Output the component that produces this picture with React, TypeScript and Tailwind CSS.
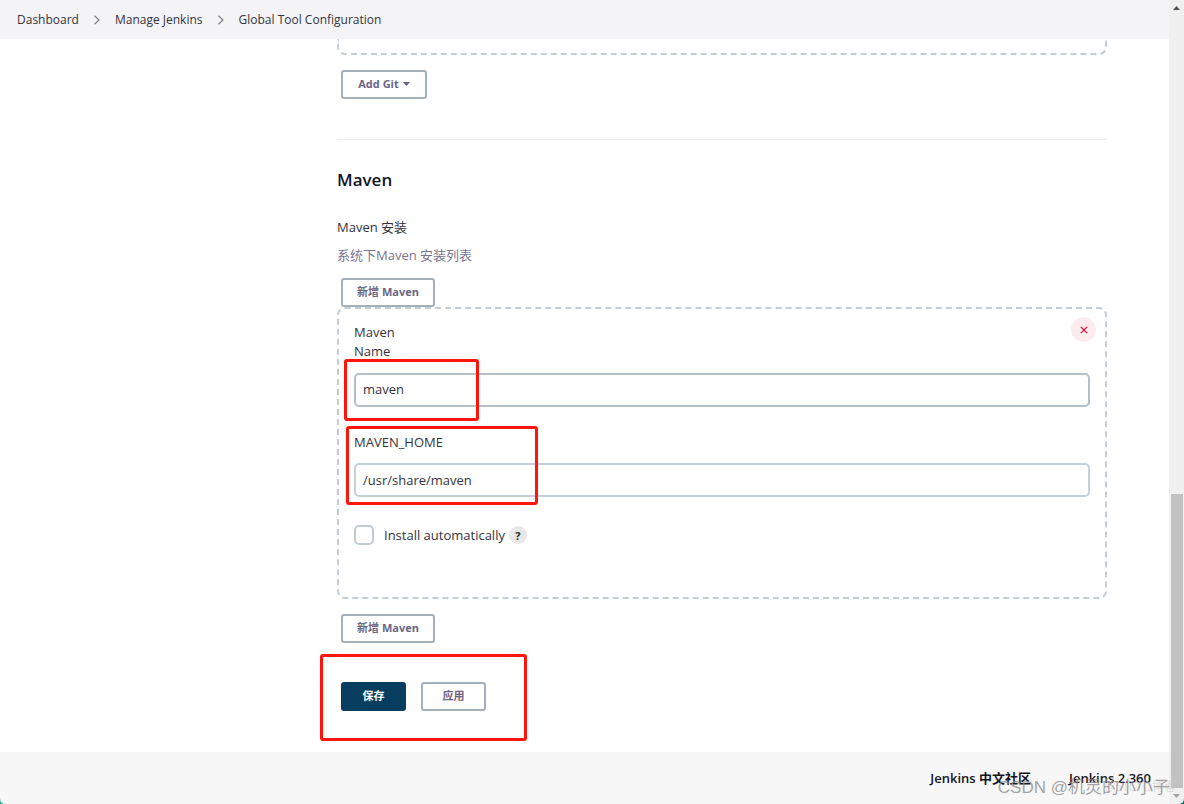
import React, { useState } from 'react';
import clsx from 'clsx';

const breadcrumbs = ['Dashboard', 'Manage Jenkins', 'Global Tool Configuration'];

interface ButtonProps {
  children: React.ReactNode;
  primary?: boolean;
  className?: string;
}

const Button: React.FC<ButtonProps> = ({ children, primary, className }) => (
  <button
    type="button"
    className={clsx(
      'inline-flex h-[29px] items-center justify-center rounded-[3px] border-2 pb-[2px] text-[11px] font-bold whitespace-nowrap',
      primary ? 'border-[#073d5e] bg-[#073d5e] text-white' : 'border-[#a3b0ba] bg-white text-[#6b6583]',
      className
    )}
  >
    {children}
  </button>
);

// Red marker drawn over the parts of the form worth noticing
const Highlight: React.FC<{ className: string }> = ({ className }) => (
  <div className={clsx('pointer-events-none absolute rounded-[3px] border-[3px] border-[#ff160a]', className)} />
);

const Scrollbar = () => (
  <div className="flex w-[15px] shrink-0 flex-col items-center bg-[#f0f0f0]">
    <svg className="h-4 w-[15px]" viewBox="0 0 15 16">
      <path d="M4 10 L7.5 6 L11 10 Z" fill="#505050" />
    </svg>
    <div className="flex w-3 flex-1 flex-col">
      <div className="flex-[478]" />
      <div className="flex-[294] bg-[#c1c1c1]" />
    </div>
    <svg className="h-4 w-[15px]" viewBox="0 0 15 16">
      <path d="M4 6 L7.5 10 L11 6 Z" fill="#a3a3a3" />
    </svg>
  </div>
);

export default function App() {
  const [name, setName] = useState('maven');
  const [home, setHome] = useState('/usr/share/maven');
  const [autoInstall, setAutoInstall] = useState(false);

  return (
    <div className="relative flex min-h-screen bg-white font-['Open_Sans','Noto_Sans_CJK_SC',sans-serif] text-[13px] leading-[19px] text-[#333340]">
      <div className="flex min-w-0 flex-1 flex-col">
        {/* Breadcrumbs */}
        <nav className="flex h-[39px] items-center bg-[#f4f4f6] px-[17px] text-[12px]">
          {breadcrumbs.map((item, i) => (
            <React.Fragment key={item}>
              {i > 0 && (
                <svg className="mx-3 h-3 w-3" viewBox="0 0 12 12" fill="none" stroke="#808088" strokeWidth="1.2">
                  <path d="M3.5 1.8 L8 6 L3.5 10.2" />
                </svg>
              )}
              <a href="#">{item}</a>
            </React.Fragment>
          ))}
        </nav>

        <main className="flex-1 pr-[62px] pl-[337px]">
          {/* Git installations, scrolled almost out of view */}
          <div className="h-4 rounded-b-lg border-2 border-t-0 border-dashed border-[#c3cdd3]" />
          <div className="mt-[15px] pl-1">
            <Button className="w-[86px] gap-1">
              Add Git
              <svg className="h-1 w-[7px]" viewBox="0 0 7 4">
                <path d="M0 0 H7 L3.5 4 Z" fill="#6b6583" />
              </svg>
            </Button>
          </div>

          <hr className="mt-10 border-[#ececee]" />

          {/* Maven installations */}
          <h2 className="mt-7 text-[17px] leading-6 font-semibold text-[#14141f]">Maven</h2>
          <div className="mt-[26px]">Maven 安装</div>
          <p className="mt-[9px] text-[#7a7592]">系统下Maven 安装列表</p>
          <div className="mt-[13px] pl-1">
            <Button className="w-[94px]">新增 Maven</Button>
          </div>

          <section className="relative h-[292px] rounded-lg border-2 border-dashed border-[#c3cdd3] px-[15px] pt-[14px]">
            <button
              type="button"
              aria-label="Delete"
              className="absolute top-2 right-[9px] flex h-[25px] w-[25px] items-center justify-center rounded-full bg-[#fdebee]"
            >
              <svg className="h-2 w-2" viewBox="0 0 8 8" stroke="#e6002e" strokeWidth="1.2">
                <path d="M0.8 0.8 L7.2 7.2 M7.2 0.8 L0.8 7.2" />
              </svg>
            </button>
            <div>Maven</div>
            <div className="relative">
              <label htmlFor="name" className="block">Name</label>
              <input
                id="name"
                type="text"
                value={name}
                onChange={(e) => setName(e.target.value)}
                className="mt-3 block h-[34px] w-full rounded-[5px] border-2 border-[#b3bfc9] bg-white px-[7px] pb-[2px] outline-none"
              />
              <Highlight className="top-[17px] -left-[10px] h-[62px] w-[135px]" />
            </div>
            <div className="relative mt-[26px]">
              <label htmlFor="home" className="block">MAVEN_HOME</label>
              <input
                id="home"
                type="text"
                value={home}
                onChange={(e) => setHome(e.target.value)}
                className="mt-[11px] block h-[34px] w-full rounded-[5px] border-2 border-[#c5d0d7] bg-white px-[7px] outline-none"
              />
              <Highlight className="-top-[7px] -left-2 h-[79px] w-[192px]" />
            </div>
            <div className="mt-7 flex items-center">
              <label className="flex items-center gap-[10px]">
                <input
                  type="checkbox"
                  checked={autoInstall}
                  onChange={(e) => setAutoInstall(e.target.checked)}
                  className="h-5 w-5 appearance-none rounded-[5px] border-2 border-[#c0cbd3] bg-white checked:bg-[#073d5e]"
                />
                Install automatically
              </label>
              <button
                type="button"
                aria-label="Help"
                className="ml-1 flex h-[18px] w-[18px] items-center justify-center rounded-full bg-[#e8e8e8] text-[11px] font-bold text-[#222228]"
              >
                ?
              </button>
            </div>
          </section>

          <div className="mt-[15px] pl-1">
            <Button className="w-[94px]">新增 Maven</Button>
          </div>

          {/* Save / apply */}
          <div className="relative mt-[39px] mb-[41px] flex gap-[15px] pl-1">
            <Button primary className="w-[65px]">保存</Button>
            <Button className="w-[65px]">应用</Button>
            <Highlight className="-top-7 -left-[17px] h-[87px] w-[207px]" />
          </div>
        </main>

        <footer className="flex h-[52px] items-center justify-end gap-[38px] bg-[#f7f7f7] pr-[18px] font-semibold text-[#14141f]">
          <a href="#">Jenkins 中文社区</a>
          <a href="#">Jenkins 2.360</a>
        </footer>
      </div>

      <Scrollbar />

      {/* Watermarks */}
      <span className="pointer-events-none absolute right-2 bottom-2 text-[12px] whitespace-nowrap text-[#cccccc]/60">@51CTO博客</span>
      <span className="pointer-events-none absolute right-[14px] bottom-1 font-['Liberation_Sans','Noto_Sans_CJK_SC',sans-serif] text-[17px] leading-6 whitespace-nowrap text-[#8c8c8c]/80">
        CSDN @机灵的小小子
      </span>

      {/* Rounded window corners */}
      <svg className="absolute bottom-0 left-0 h-[6px] w-[6px]" viewBox="0 0 6 6">
        <path d="M0 0 Q0 6 6 6 H0 Z" fill="#2fae94" />
      </svg>
      <svg className="absolute right-0 bottom-0 h-[6px] w-[6px]" viewBox="0 0 6 6">
        <path d="M6 0 Q6 6 0 6 H6 Z" fill="#007a5c" />
      </svg>
    </div>
  );
}
